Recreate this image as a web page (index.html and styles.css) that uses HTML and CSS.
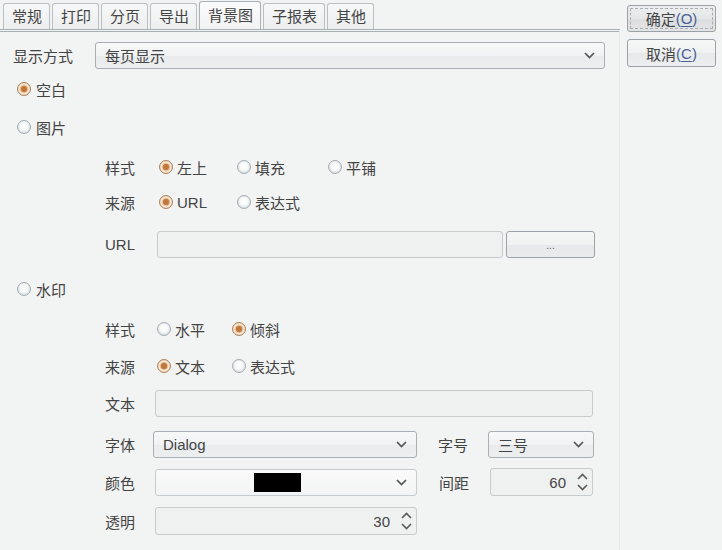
FILE: index.html
```html
<!DOCTYPE html>
<html>
<head>
<meta charset="utf-8">
<link rel="stylesheet" href="styles.css">
</head>
<body>
<div class="dialog">
  <div class="main">
    <div class="tabs">
      <div class="tab">常规</div>
      <div class="tab">打印</div>
      <div class="tab">分页</div>
      <div class="tab">导出</div>
      <div class="tab active">背景图</div>
      <div class="tab">子报表</div>
      <div class="tab">其他</div>
    </div>
    <div class="panel">
      <div class="row">
        <span class="lbl-mode">显示方式</span>
        <div class="combo combo-mode"><span class="val">每页显示</span><svg class="chev" width="11" height="7" viewBox="0 0 11 7"><path d="M1 1 L5.5 5.5 L10 1" fill="none" stroke="#555" stroke-width="1.7"/></svg></div>
      </div>
      <div class="row mt6 top-opt"><span class="radio on"></span><span class="opt-text">空白</span></div>
      <div class="row mt10 top-opt"><span class="radio"></span><span class="opt-text">图片</span></div>

      <div class="row mt12 sub img">
        <span class="lbl">样式</span>
        <div class="opt w78"><span class="radio on"></span><span class="opt-text">左上</span></div>
        <div class="opt w91"><span class="radio"></span><span class="opt-text">填充</span></div>
        <div class="opt"><span class="radio"></span><span class="opt-text">平铺</span></div>
      </div>
      <div class="row mt7 sub img">
        <span class="lbl">来源</span>
        <div class="opt w78"><span class="radio on"></span><span class="opt-text">URL</span></div>
        <div class="opt"><span class="radio"></span><span class="opt-text">表达式</span></div>
      </div>
      <div class="row mt14 sub img-url">
        <span class="lbl">URL</span>
        <div class="field url-field"></div>
        <div class="dots-btn"><span>...</span></div>
      </div>

      <div class="row mt17 top-opt"><span class="radio"></span><span class="opt-text">水印</span></div>

      <div class="row mt12 sub wm">
        <span class="lbl">样式</span>
        <div class="opt w75"><span class="radio"></span><span class="opt-text">水平</span></div>
        <div class="opt"><span class="radio on"></span><span class="opt-text">倾斜</span></div>
      </div>
      <div class="row mt9 sub wm">
        <span class="lbl">来源</span>
        <div class="opt w75"><span class="radio on"></span><span class="opt-text">文本</span></div>
        <div class="opt"><span class="radio"></span><span class="opt-text">表达式</span></div>
      </div>
      <div class="row mt9 sub wm-field">
        <span class="lbl">文本</span>
        <div class="field text-field"></div>
      </div>
      <div class="row mt13 sub wm-field">
        <span class="lbl">字体</span>
        <div class="combo combo-font"><span class="val">Dialog</span><svg class="chev" width="11" height="7" viewBox="0 0 11 7"><path d="M1 1 L5.5 5.5 L10 1" fill="none" stroke="#555" stroke-width="1.7"/></svg></div>
        <span class="lbl right-lbl">字号</span>
        <div class="combo combo-size"><span class="val">三号</span><svg class="chev" width="11" height="7" viewBox="0 0 11 7"><path d="M1 1 L5.5 5.5 L10 1" fill="none" stroke="#555" stroke-width="1.7"/></svg></div>
      </div>
      <div class="row mt10 sub wm-field">
        <span class="lbl">颜色</span>
        <div class="combo combo-color"><span class="swatch-area"><span class="swatch"></span></span><svg class="chev" width="11" height="7" viewBox="0 0 11 7"><path d="M1 1 L5.5 5.5 L10 1" fill="none" stroke="#555" stroke-width="1.7"/></svg></div>
        <span class="lbl right-lbl gap-lbl">间距</span>
        <div class="spinner spin-gap"><span class="num">60</span><svg class="spin" width="11" height="20" viewBox="0 0 11 20"><path d="M1 7 L5.5 2.5 L10 7" fill="none" stroke="#5a5a5a" stroke-width="1.6"/><path d="M1 13 L5.5 17.5 L10 13" fill="none" stroke="#5a5a5a" stroke-width="1.6"/></svg></div>
      </div>
      <div class="row mt11 sub wm-field">
        <span class="lbl">透明</span>
        <div class="spinner spin-alpha"><span class="num">30</span><svg class="spin" width="11" height="20" viewBox="0 0 11 20"><path d="M1 7 L5.5 2.5 L10 7" fill="none" stroke="#5a5a5a" stroke-width="1.6"/><path d="M1 13 L5.5 17.5 L10 13" fill="none" stroke="#5a5a5a" stroke-width="1.6"/></svg></div>
      </div>
    </div>
  </div>
  <div class="side">
    <div class="btn btn-ok"><span class="focus">确定<span class="mn">(<u>O</u>)</span></span></div>
    <div class="btn btn-cancel">取消<span class="mn">(<u>C</u>)</span></div>
  </div>
</div>
</body>
</html>
```
FILE: styles.css
```css
* { box-sizing: border-box; }
html, body {
  margin: 0;
  padding: 0;
  width: 722px;
  height: 550px;
  overflow: hidden;
  background: #f2f3f3;
}
body {
  font-family: "Liberation Sans", "Noto Sans CJK SC", sans-serif;
  font-size: 15px;
  color: #444;
}
.dialog {
  display: flex;
  align-items: flex-start;
  height: 550px;
}
.main {
  width: 620px;
  height: 550px;
  display: flex;
  flex-direction: column;
}
.tabs {
  height: 29px;
  display: flex;
  align-items: flex-end;
  gap: 2px;
  padding-left: 3px;
}
.tab {
  height: 26px;
  padding: 0 7px 0 8px;
  border: 1px solid #b9bfc3;
  border-bottom: none;
  border-radius: 3px 3px 0 0;
  background: linear-gradient(#f7f8f8, #eceeef);
  display: flex;
  align-items: center;
  line-height: 1;
}
.tab.active {
  height: 28px;
  background: linear-gradient(#fbfbfb, #f2f3f3);
  border-color: #aab1b6;
}
.panel {
  flex: 1;
  border-top: 3px double #a9afb3;
  border-right: 1px solid #e3e5e6;
  padding: 9px 0 0 13px;
  display: flex;
  flex-direction: column;
}
.row {
  height: 28px;
  display: flex;
  align-items: center;
  flex-shrink: 0;
}
.mt6 { margin-top: 6px; }
.mt7 { margin-top: 7px; }
.mt9 { margin-top: 9px; }
.mt10 { margin-top: 10px; }
.mt11 { margin-top: 11px; }
.mt12 { margin-top: 12px; }
.mt13 { margin-top: 13px; }
.mt14 { margin-top: 14px; }
.mt17 { margin-top: 17px; }

.lbl-mode { width: 82px; }
.top-opt { padding-left: 4px; }
.sub { padding-left: 92px; }
.img .lbl { width: 54px; }
.img-url .lbl { width: 52px; }
.wm .lbl { width: 52px; }
.wm-field .lbl { width: 50px; }
.right-lbl { margin-left: 21px; }
.wm-field .right-lbl { width: 50px; }
.wm-field .gap-lbl { margin-left: 22px; width: 51px; }

.opt { display: flex; align-items: center; }
.w78 { width: 78px; }
.w91 { width: 91px; }
.w75 { width: 75px; }
.opt-text { margin-left: 4px; }
.top-opt .opt-text { margin-left: 5px; }

.radio {
  width: 14px;
  height: 14px;
  border-radius: 50%;
  border: 1px solid #a3adb4;
  background: radial-gradient(circle at 50% 45%, #ffffff 0, #f7f8f8 4px, #dfe3e6 6px);
  flex-shrink: 0;
}
.radio.on {
  border-color: #b08158;
  background: radial-gradient(circle, #bf7238 0, #c47b3f 2.8px, #e7c29c 3.6px, #f7ecdf 4.8px, #ecd2b5 6px);
}

.combo {
  height: 27px;
  border: 1px solid #a9b0b5;
  border-radius: 3px;
  background: linear-gradient(#f7f8f8 0%, #f1f2f3 50%, #e9ebec 51%, #eceeef 100%);
  display: flex;
  align-items: center;
  padding: 0 9px 0 9px;
}
.combo .val { flex: 1; }
.combo-mode { width: 510px; }
.combo-font { width: 264px; margin-left: -2px; }
.combo-size { width: 106px; }
.combo-color {
  width: 262px;
  background: linear-gradient(#fafafa, #f3f4f4);
  border-color: #c5cbce;
}
.swatch-area { flex: 1; display: flex; justify-content: center; padding-right: 6px; }
.swatch { width: 47px; height: 19px; background: #000; }

.field {
  height: 27px;
  border: 1px solid #c6cbce;
  border-radius: 3px;
  background: #eff0f0;
}
.url-field { width: 346px; }
.text-field { width: 438px; }
.dots-btn {
  width: 89px;
  height: 27px;
  margin-left: 3px;
  border: 1px solid #9ca3a8;
  border-radius: 3px;
  background: linear-gradient(#f3f4f4 0%, #f1f2f2 50%, #e6e8ea 51%, #e9ebec 100%);
  display: flex;
  justify-content: center;
  align-items: center;
  font-size: 10px;
  color: #666;
  padding-top: 2px;
}

.spinner {
  height: 28px;
  border: 1px solid #c6cbce;
  border-radius: 3px;
  background: #eff0f0;
  display: flex;
  align-items: center;
  justify-content: flex-end;
  padding-right: 4px;
}
.spin-gap { width: 103px; }
.spin-alpha { width: 262px; }
.spinner .num { margin-right: 11px; }

.side {
  margin-left: 7px;
  padding-top: 5px;
  display: flex;
  flex-direction: column;
  gap: 7px;
}
.btn {
  width: 89px;
  height: 28px;
  border: 1px solid #9ba2a7;
  border-radius: 3px;
  display: flex;
  align-items: center;
  justify-content: center;
  background: linear-gradient(#f6f7f7 0%, #f0f1f1 50%, #e7e9ea 51%, #ebedee 100%);
  font-size: 15px;
}
.btn-ok {
  height: 27px;
  padding: 2px;
  background: linear-gradient(#eceded 0%, #e6e7e8 50%, #dcdedf 51%, #e1e3e4 100%);
}
.focus {
  flex: 1;
  height: 100%;
  border: 1px dashed #a9aeb2;
  display: flex;
  align-items: center;
  justify-content: center;
}
.mn { color: #4a5f95; }
.mn u { text-decoration-thickness: 1px; text-underline-offset: 2px; }
```
